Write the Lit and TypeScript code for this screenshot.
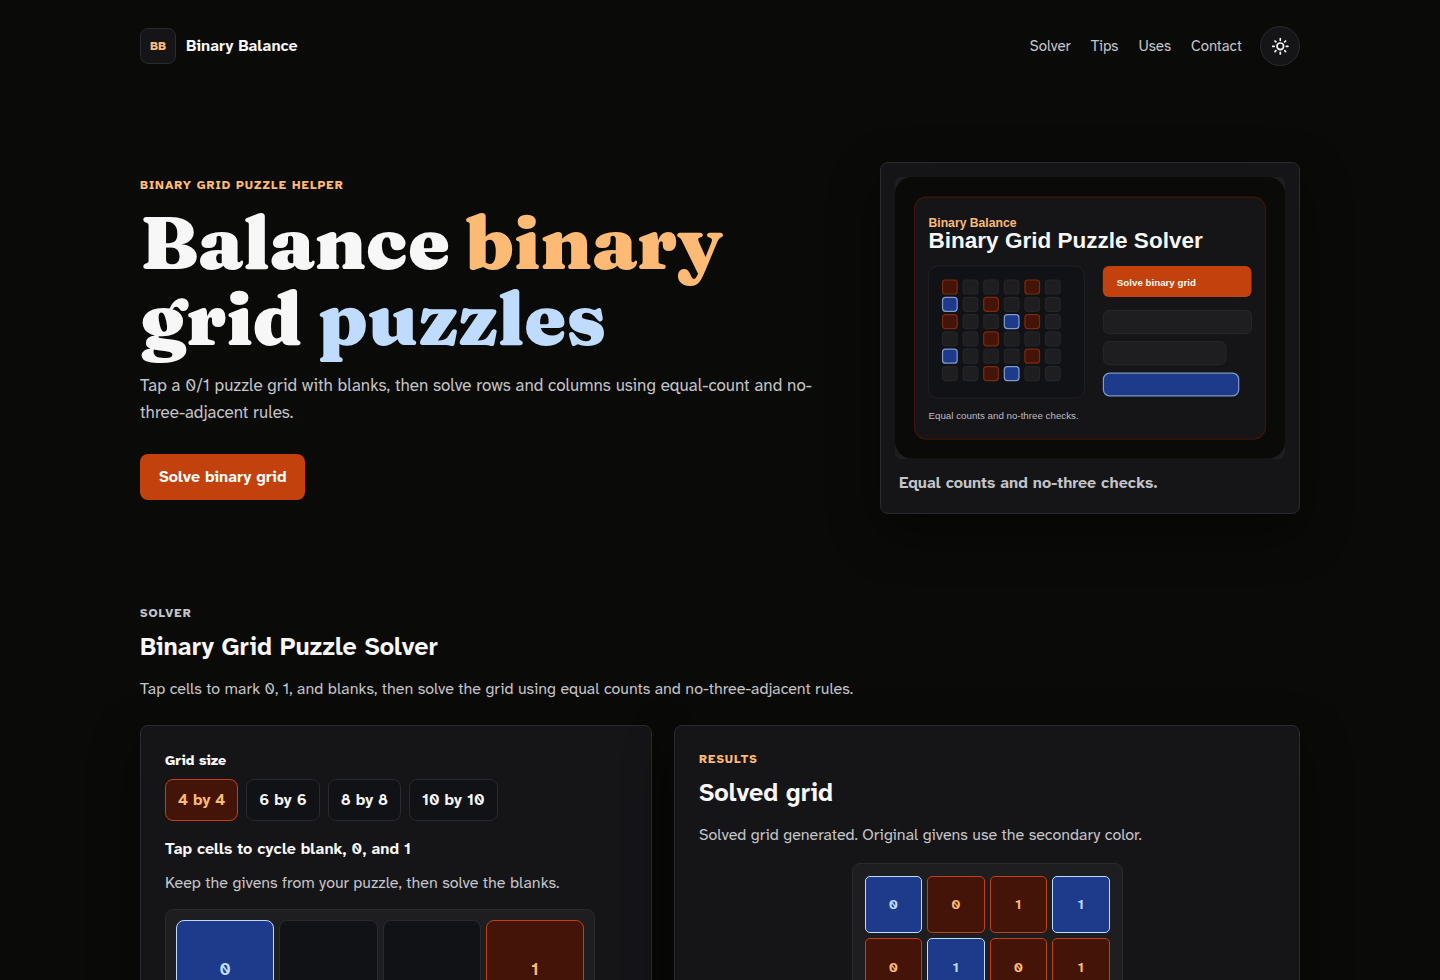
import { LitElement, html, css, svg } from "lit";
import { customElement, state } from "lit/decorators.js";
import { classMap } from "lit/directives/class-map.js";

type Cell = { value: string; tone: "given" | "solved" | "blank" };

const g = (value: string): Cell => ({ value, tone: "given" });
const s = (value: string): Cell => ({ value, tone: "solved" });
const b: Cell = { value: "", tone: "blank" };

const PUZZLE: Cell[] = [
  g("0"), b, b, s("1"),
  b, s("1"), b, b,
  b, b, g("0"), b,
  s("1"), b, b, g("0"),
];

const SOLUTION: Cell[] = [
  g("0"), s("0"), s("1"), g("1"),
  s("0"), g("1"), s("0"), s("1"),
  s("1"), s("0"), g("1"), s("0"),
  g("1"), s("1"), s("0"), g("0"),
];

const PREVIEW = ["r...r.", "b.r...", "r..br.", "..r...", "b...r.", "..rb.."];

@customElement("balance-preview")
export class BalancePreview extends LitElement {
  static styles = css`
    :host { display: block; }
    .art { display: block; width: 100%; height: auto; border-radius: 6px; background: #1e1e20; }
    .type { font-family: "Liberation Sans", Arial, sans-serif; }
    .strong { font-weight: 700; }
  `;

  private cell(kind: string, x: number, y: number) {
    const fill = kind === "r" ? "#431407" : kind === "b" ? "#1e3a8a" : "#1e1e20";
    const stroke = kind === "r" ? "#7c2a0c" : kind === "b" ? "#7f9cc9" : "#252528";
    return svg`<rect x=${x} y=${y} width="24" height="23" rx="5" fill=${fill} stroke=${stroke} stroke-width="2"></rect>`;
  }

  render() {
    return html`
      <svg class="art" viewBox="0 0 640 462" role="img" aria-label="Binary Grid Puzzle Solver preview">
        <rect width="640" height="462" rx="28" fill="#0a0a08"></rect>
        <rect x="32" y="33" width="576" height="397" rx="20" fill="#151517" stroke="#431407" stroke-width="2"></rect>
        <text class="type strong" x="55" y="82" font-size="20" fill="#fdba74">Binary Balance</text>
        <text class="type strong" x="55" y="117" font-size="37" fill="#f7f7f7">Binary Grid Puzzle Solver</text>
        <rect x="55" y="146" width="256" height="217" rx="16" fill="#111215" stroke="#1e1e22" stroke-width="2"></rect>
        ${PREVIEW.map((row, r) => [...row].map((kind, c) => this.cell(kind, 78 + c * 33.8, 169 + r * 28.4)))}
        <rect x="341" y="146" width="244" height="51" rx="10" fill="#c2410c"></rect>
        <text class="type strong" x="364" y="179" font-size="16" fill="#fff7ed">Solve binary grid</text>
        <rect x="342" y="219" width="243" height="38" rx="10" fill="#1e1e20" stroke="#252528" stroke-width="2"></rect>
        <rect x="342" y="270" width="201" height="38" rx="10" fill="#1e1e20" stroke="#252528" stroke-width="2"></rect>
        <rect x="342" y="322" width="222" height="37" rx="10" fill="#1e3a8a" stroke="#7f9cc9" stroke-width="2"></rect>
        <text class="type" x="55" y="397" font-size="16" fill="#bcbcc1">Equal counts and no-three checks.</text>
      </svg>
    `;
  }
}

@customElement("app-root")
export class AppRoot extends LitElement {
  @state() private size = 4;

  static styles = css`
    :host {
      display: block;
      min-height: 100vh;
      overflow: hidden;
      background: #0a0a08;
      color: #f7f7f7;
      font-family: "Atkinson Hyperlegible Next", "Inter", sans-serif;
      font-size: 16px;
      line-height: 26px;
    }
    * { box-sizing: border-box; }
    h1, h2, h3, p, figure, fieldset { margin: 0; }
    .wrap { max-width: 1208px; margin: 0 auto; padding: 0 24px; }
    .bar { display: flex; align-items: center; justify-content: space-between; padding-top: 26px; }
    .brand { display: flex; align-items: center; gap: 10px; color: #f7f7f7; font-weight: 740; text-decoration: none; }
    .mark {
      display: grid; place-items: center; width: 36px; height: 36px;
      border: 1px solid #2a2a2e; border-radius: 8px; background: #151517;
      color: #fdba74; font-size: 12px; font-weight: 800;
    }
    .nav { display: flex; align-items: center; gap: 20px; }
    .link { color: #c4c4c9; font-size: 15px; text-decoration: none; }
    .theme {
      display: grid; place-items: center; width: 40px; height: 40px; margin-left: -2px; padding: 0;
      border: 1px solid #2a2a2e; border-radius: 50%; background: #151517; color: #f7f7f7;
    }
    .hero {
      display: grid; grid-template-columns: minmax(0, 1fr) 420px; align-items: center;
      gap: 52px; padding: 96px 0 90px;
    }
    .eyebrow { color: #fdba74; font-size: 12px; font-weight: 800; letter-spacing: 1px; line-height: 18px; text-transform: uppercase; }
    .quiet { color: #c4c4c9; }
    .title {
      margin-top: 10px;
      font-family: "Fraunces", "DejaVu Serif", serif;
      font-size: 75px; font-weight: 900; line-height: 76px;
    }
    .warm { color: #fdba74; }
    .cool { color: #bfdbfe; }
    .lead { margin-top: 16px; color: #c4c4c9; font-size: 17px; line-height: 27px; }
    .cta {
      height: 46px; margin-top: 28px; padding: 0 19px; border: 0; border-radius: 8px;
      background: #c2410c; color: #fff; font: inherit; font-weight: 740;
    }
    .shot, .card {
      border: 1px solid #2a2a2e; border-radius: 8px; background: #151517;
      box-shadow: 0 18px 50px rgba(0, 0, 0, 0.45);
    }
    .shot { padding: 14px; }
    .caption { padding: 11px 4px 3px; color: #c4c4c9; font-weight: 740; }
    .heading { margin-top: 9px; font-size: 25px; font-weight: 700; line-height: 32px; }
    .note { margin-top: 13px; color: #c4c4c9; }
    .cards { display: grid; grid-template-columns: 9fr 11fr; align-items: start; gap: 22px; margin-top: 23px; }
    .card { padding: 24px; }
    .sizes { padding: 0; border: 0; }
    .legend { padding: 0; font-size: 14px; font-weight: 800; line-height: 20px; }
    .options { display: flex; gap: 8px; padding-top: 9px; }
    .option {
      height: 42px; padding: 0 12px; border: 1px solid #2a2a2e; border-radius: 8px;
      background: #111215; color: #f7f7f7; font: inherit; font-weight: 740;
    }
    .option.on { border-color: #c2410c; background: #431407; color: #fdba74; }
    .sub { margin-top: 15px; font-size: 16px; font-weight: 740; line-height: 26px; }
    .hint { margin-top: 8px; color: #c4c4c9; }
    .grid {
      display: grid; grid-template-columns: repeat(4, 1fr); gap: 5px; margin-top: 13px;
      border: 1px solid #2a2a2e; border-radius: 8px; background: #1e1e20;
    }
    .entry { max-width: 430px; padding: 10px; }
    .answer { max-width: 271px; margin: 15px auto 0; padding: 12px; }
    .cell {
      display: grid; place-items: center; aspect-ratio: 1; padding: 0; border: 1px solid #2a2a2e;
      border-radius: 8px; background: #111215; color: inherit; font: inherit; font-weight: 740;
    }
    .entry .cell { font-size: 17px; }
    .answer .cell { border-radius: 5px; font-size: 14px; }
    .cell.given { border-color: #bfdbfe; background: #1e3a8a; color: #bfdbfe; }
    .cell.solved { border-color: #c2410c; background: #431407; color: #fdba74; }
    @media (max-width: 900px) {
      .hero, .cards { grid-template-columns: minmax(0, 1fr); }
    }
  `;

  render() {
    return html`
      <div class="wrap">
        <header class="bar">
          <a class="brand" href="#"><span class="mark">BB</span>Binary Balance</a>
          <nav class="nav">
            ${["Solver", "Tips", "Uses", "Contact"].map((t) => html`<a class="link" href="#${t.toLowerCase()}">${t}</a>`)}
            <button class="theme" type="button" aria-label="Toggle theme">
              <svg width="20" height="20" viewBox="0 0 20 20" fill="none" stroke="currentColor" stroke-width="1.7" stroke-linecap="round">
                <circle cx="10.3" cy="10.3" r="3.3"></circle>
                <path d="M10.3 2.7v1.6M10.3 16.3v1.6M2.7 10.3h1.6M16.3 10.3h1.6M5 5l.9.9M14.7 14.7l.9.9M5 15.6l.9-.9M14.7 5.9l.9-.9"></path>
              </svg>
            </button>
          </nav>
        </header>
        <main>
          <section class="hero">
            <div>
              <p class="eyebrow">Binary grid puzzle helper</p>
              <h1 class="title">Balance <span class="warm">binary</span> grid <span class="cool">puzzles</span></h1>
              <p class="lead">Tap a 0/1 puzzle grid with blanks, then solve rows and columns using equal-count and no-three-adjacent rules.</p>
              <button class="cta" type="button">Solve binary grid</button>
            </div>
            <figure class="shot">
              <balance-preview></balance-preview>
              <figcaption class="caption">Equal counts and no-three checks.</figcaption>
            </figure>
          </section>
          <section id="solver">
            <p class="eyebrow quiet">Solver</p>
            <h2 class="heading">Binary Grid Puzzle Solver</h2>
            <p class="note">Tap cells to mark 0, 1, and blanks, then solve the grid using equal counts and no-three-adjacent rules.</p>
            <div class="cards">
              <div class="card">
                <fieldset class="sizes">
                  <legend class="legend">Grid size</legend>
                  <div class="options">
                    ${[4, 6, 8, 10].map((n) => html`
                      <button type="button" class=${classMap({ option: true, on: n === this.size })} @click=${() => (this.size = n)}>${n} by ${n}</button>`)}
                  </div>
                </fieldset>
                <h3 class="sub">Tap cells to cycle blank, 0, and 1</h3>
                <p class="hint">Keep the givens from your puzzle, then solve the blanks.</p>
                <div class="grid entry">
                  ${PUZZLE.map((c) => html`<button type="button" class="cell ${c.tone}" aria-label=${c.value || "blank"}>${c.value}</button>`)}
                </div>
              </div>
              <div class="card">
                <p class="eyebrow">Results</p>
                <h2 class="heading">Solved grid</h2>
                <p class="note">Solved grid generated. Original givens use the secondary color.</p>
                <div class="grid answer">
                  ${SOLUTION.map((c) => html`<div class="cell ${c.tone}">${c.value}</div>`)}
                </div>
              </div>
            </div>
          </section>
        </main>
      </div>
    `;
  }
}
